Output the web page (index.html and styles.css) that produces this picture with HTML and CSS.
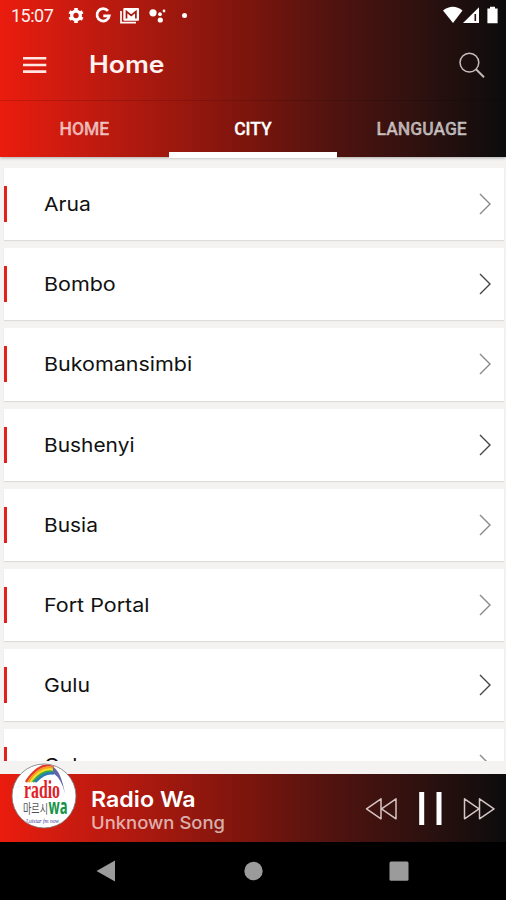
FILE: index.html
```html
<!DOCTYPE html>
<html lang="en">
<head>
<meta charset="utf-8">
<title>Home</title>
<link rel="stylesheet" href="styles.css">
</head>
<body>
<div class="phone">
  <header class="top">
    <div class="status">
      <span class="time">15:07</span>
      <svg class="notifications" width="124" height="20" viewBox="66 6 124 20" fill="#fff">
        <circle cx="76" cy="15.5" r="4.3" fill="none" stroke="#fff" stroke-width="3.3"/>
        <path d="M76 7.9v3M76 20v3M69.4 11.7l2.6 1.5M80 17.8l2.6 1.5M69.4 19.3l2.6-1.5M80 13.2l2.6-1.5" stroke="#fff" stroke-width="3.6"/>
        <path d="M108 10.9a6.2 6.2 0 1 0 1.3 4.9h-6" fill="none" stroke="#fff" stroke-width="2.7"/>
        <path d="M121 11v11.7h15" fill="none" stroke="#fff" stroke-width="1.7"/>
        <rect x="123.3" y="8" width="15.7" height="12.7" rx="1"/>
        <path d="M126.5 18.5v-7l4.7 4 4.7-4v7" fill="none" stroke="#a51810" stroke-width="1.7"/>
        <circle cx="153" cy="12.8" r="3.6"/><circle cx="160" cy="14.2" r="1.9"/><circle cx="164" cy="11" r="1.4"/><circle cx="160.3" cy="20" r="2.6"/>
        <circle cx="184.5" cy="15.5" r="2.5"/>
      </svg>
      <svg class="signals" width="56" height="20" viewBox="442 6 56 20" fill="#fff">
        <path d="M443 10.5Q453 3 462.5 10.5L453 23z"/>
        <path d="M463 23L479 7.2V23z"/><path d="M475.3 14v7" stroke="#29110f" stroke-width="1.6"/>
        <path d="M490 6.8h5v1.7h2.6V23.3H487.4V8.5H490z"/>
      </svg>
    </div>
    <div class="appbar">
      <svg class="menu" width="24" height="18" viewBox="0 0 24 18"><path d="M0 2.2h23.3M0 9h23.3M0 15.6h23.3" stroke="#ffe7e4" stroke-width="2.6"/></svg>
      <h1>Home</h1>
      <svg class="search" width="26" height="26" viewBox="0 0 26 26" fill="none" stroke="#c7bcba" stroke-width="1.5"><circle cx="10.4" cy="10.6" r="9.4"/><path d="M17 17.2l8 8" stroke-width="2"/></svg>
    </div>
    <nav class="tabs">
      <span>HOME</span><span class="active">CITY</span><span>LANGUAGE</span>
    </nav>
  </header>
  <main class="list">
    <div class="row"><span class="arua">Arua</span><svg class="chevron soft" viewBox="0 0 12 22"><path d="M1 1l10 10L1 21"/></svg></div>
    <div class="row"><span class="bombo">Bombo</span><svg class="chevron" viewBox="0 0 12 22"><path d="M1 1l10 10L1 21"/></svg></div>
    <div class="row"><span class="bukomansimbi">Bukomansimbi</span><svg class="chevron soft" viewBox="0 0 12 22"><path d="M1 1l10 10L1 21"/></svg></div>
    <div class="row"><span class="bushenyi">Bushenyi</span><svg class="chevron" viewBox="0 0 12 22"><path d="M1 1l10 10L1 21"/></svg></div>
    <div class="row"><span class="busia">Busia</span><svg class="chevron soft" viewBox="0 0 12 22"><path d="M1 1l10 10L1 21"/></svg></div>
    <div class="row"><span class="fort">Fort Portal</span><svg class="chevron soft" viewBox="0 0 12 22"><path d="M1 1l10 10L1 21"/></svg></div>
    <div class="row"><span class="gulu">Gulu</span><svg class="chevron" viewBox="0 0 12 22"><path d="M1 1l10 10L1 21"/></svg></div>
    <div class="row"><span class="gulu">Gulu</span><svg class="chevron soft" viewBox="0 0 12 22"><path d="M1 1l10 10L1 21"/></svg></div>
  </main>
  <footer class="player">
    <svg class="logo" width="66" height="66" viewBox="0 0 66 66">
      <defs><clipPath id="disc"><circle cx="33" cy="33" r="31.500"/></clipPath></defs>
      <circle cx="33" cy="33" r="32" fill="#fff" stroke="#777" stroke-width=".8"/>
      <g clip-path="url(#disc)">
        <g fill="none" stroke-width="2.500">
          <path d="M15 19Q28 -1 43 3" stroke="#e6372a"/>
          <path d="M17.300 19Q29 2 43 5" stroke="#f39a20"/>
          <path d="M19.600 19Q30 4 43 7" stroke="#f5df26"/>
          <path d="M21.900 19Q32 6 43 9" stroke="#38a747"/>
          <path d="M24.200 19Q34 8.500 43 10.500" stroke="#2877bd"/>
          <path d="M42 4Q50 8 54 31Q51 16 42 10z" fill="#6264ad" stroke="none"/>
        </g>
        <text class="logo-radio" transform="translate(13 35) scale(.72 1)" textLength="50" lengthAdjust="spacingAndGlyphs">radio</text>
        <text class="logo-mid" x="12" y="50" textLength="25" lengthAdjust="spacingAndGlyphs">마르시</text>
        <text class="logo-wa" x="37.500" y="51" textLength="19" lengthAdjust="spacingAndGlyphs">wa</text>
        <text class="logo-sub" x="15" y="60" textLength="33" lengthAdjust="spacingAndGlyphs">Luistar fm now</text>
      </g>
    </svg>
    <div class="song"><strong>Radio Wa</strong><span>Unknown Song</span></div>
    <svg class="controls" width="132" height="36" viewBox="364 790.500 132 36" fill="none" stroke="#d4c4c2" stroke-width="1.5" stroke-linejoin="round">
      <path d="M381 799.300v20L366.500 809.300zM396 799.300v20L381.500 809.300z"/>
      <path d="M421.700 792.500v33M439 792.500v33" stroke="#fff" stroke-width="5"/>
      <path d="M464.500 799.300v20l14.500-10zM479.500 799.300v20l14.500-10z"/>
    </svg>
  </footer>
  <nav class="system">
    <svg width="506" height="58" viewBox="0 0 506 58" fill="#9b9b9b"><path d="M96.500 29L115 18.500v21z"/><circle cx="253.500" cy="29" r="9.200"/><rect x="389.500" y="19.500" width="19" height="19.300" rx="1.500"/></svg>
  </nav>
</div>
</body>
</html>
```
FILE: styles.css
```css
* { box-sizing: border-box; }
body { margin: 0; background: #000; font-family: Inter, "Liberation Sans", sans-serif; }
.phone { width: 506px; height: 900px; display: flex; flex-direction: column; overflow: hidden; background: #f4f3f1; }
.top, .player { background: linear-gradient(90deg, #ea1c0e 0, #c91b10 15%, #a0180e 33%, #79150d 50%, #50130f 66%, #2c110f 84%, #0c0c0c 100%); }
.top { height: 157px; flex: none; box-shadow: 0 1px 3px #aaa; z-index: 1; }
.status { height: 32px; display: flex; padding: 6px 8px 6px 11px; }
.time { width: 55px; font: 400 18px/20px Roboto, sans-serif; color: #fff1ef; letter-spacing: -.5px; }
.signals { margin-left: auto; }
.appbar { height: 69px; display: flex; align-items: center; padding: 0 21px 3px 23px; border-bottom: 1px solid #0002; }
h1 { margin: 0 0 0 42px; font-size: 24px; line-height: 30px; font-weight: 600; color: #fff2f0; transform: scaleX(1.105); transform-origin: left; }
.search { margin-left: auto; }
.tabs { height: 56px; display: grid; grid-template-columns: repeat(3, 1fr); text-align: center; font: 500 17.500px/56px Roboto, sans-serif; color: #ffffffa8; -webkit-text-stroke: .3px; }
.tabs .active { color: #fff; box-shadow: inset 0 -5px #fff, 0 1px #fff; }
.list { height: 604px; flex: none; padding: 11px 2px 0 4px; overflow: hidden; display: flex; flex-direction: column; gap: 8px; }
.row { height: 72.200px; flex: none; display: flex; align-items: center; background: linear-gradient(#e2211d, #e2211d) 0 18px / 3px 36px no-repeat #fff; padding: 0 13px 0 40px; justify-content: space-between; font-size: 19px; line-height: 24px; color: #111; box-shadow: 0 1px 1px #dddcda; }
.row span { padding-top: 2px; transform-origin: left; }
.chevron { width: 12px; height: 22px; fill: none; stroke: #444; stroke-width: 1.4; }
.chevron.soft { stroke: #888; }
.arua { transform: scaleX(1.11); }
.bombo { transform: scaleX(1.13); }
.bukomansimbi { transform: scaleX(1.13); }
.bushenyi { transform: scaleX(1.1); }
.busia { transform: scaleX(1.1); }
.fort { transform: scaleX(1.13); }
.gulu { transform: scaleX(1.115); }
.player { height: 68px; flex: none; margin-top: 13px; display: flex; align-items: center; padding: 0 10px 0 11px; }
.logo { flex: none; position: relative; top: -12px; }
.logo-radio { font: bold 25px "Liberation Serif", serif; fill: #df2228; }
.logo-mid { font: 13px "Noto Sans CJK KR", sans-serif; fill: #555; }
.logo-wa { font: bold 22px "Noto Sans", sans-serif; fill: #159447; }
.logo-sub { font: italic 7px "Liberation Serif", serif; fill: #3939a0; }
.song { margin-left: 14px; padding-top: 3px; display: flex; flex-direction: column; color: #fff; transform: scaleX(1.055); transform-origin: left; }
.song strong { font-size: 22px; line-height: 26px; font-weight: 600; }
.song span { font-size: 17.500px; line-height: 22px; color: #ffffffa8; font-weight: 500; }
.controls { margin-left: auto; }
.system { height: 58px; flex: none; background: #000; }
.system svg { display: block; }
```
